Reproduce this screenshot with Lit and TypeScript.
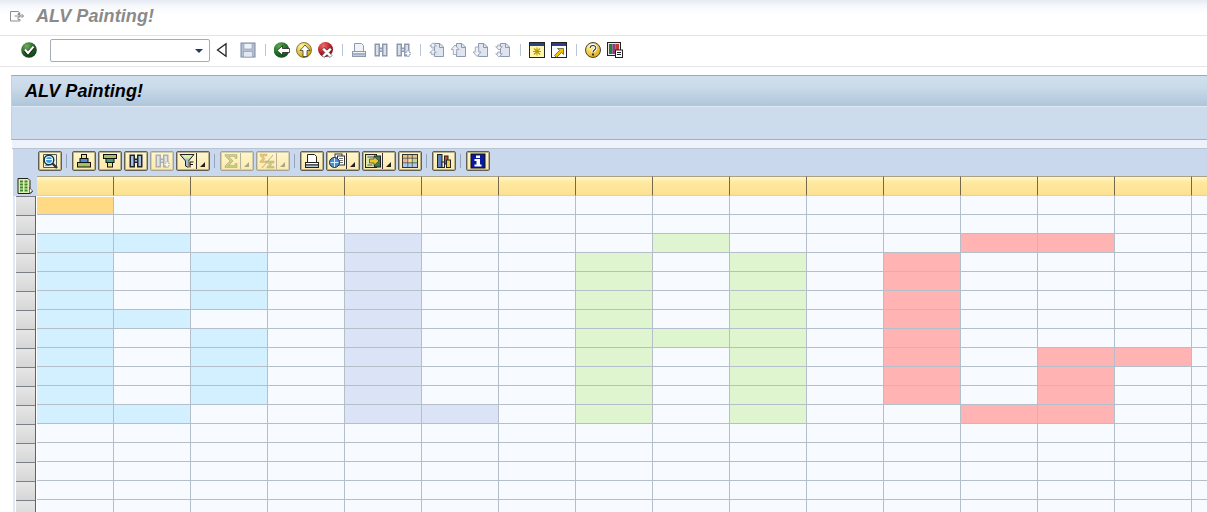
import { LitElement, html, svg, css, SVGTemplateResult } from "lit";
import { customElement } from "lit/decorators.js";

const s = (body: SVGTemplateResult, size = 16) =>
  html`<svg width=${size} height=${size} viewBox="0 0 16 16">${body}</svg>`;

const G = "#8e9ab0"; // disabled grey-blue line
const L = "#dfe4ee"; // disabled fill

const binocs = (c: string, f: string) => svg`
  <path d="M1.500 1.500h5.500v4h2v-4h5.500v13h-5.500v-4.500h-2v4.500h-5.500z" fill=${c}/>
  <rect x="3" y="3" width="2.500" height="10" fill=${f}/><rect x="10.500" y="3" width="2.500" height="10" fill=${f}/>
  <rect x="7" y="7" width="2" height="1.600" fill=${f}/>`;

const docPage = (extra: SVGTemplateResult) => svg`
  <path d="M5.500 1.500h5.500l3.500 3.500v9.500h-9z" fill=${L} stroke=${G}/><path d="M10.500 1.500v4h4" fill="none" stroke=${G}/>${extra}`;

const printer = (c: string, top: string, tray: string) => svg`
  <path d="M3.500 1.500h7l2 2v6h-9z" fill=${top} stroke=${c}/>
  <rect x="1.500" y="9.500" width="13" height="2.500" fill=${top} stroke=${c}/>
  <rect x="1.500" y="12" width="13" height="2.500" fill=${tray} stroke=${c}/>`;

const ICONS: Record<string, ReturnType<typeof s>> = {
  check: s(svg`<defs><radialGradient id="gk" cx=".35" cy=".25" r=".85"><stop offset="0" stop-color="#6fae5a"/><stop offset=".6" stop-color="#1f5a22"/><stop offset="1" stop-color="#0e3512"/></radialGradient></defs>
    <circle cx="8" cy="8" r="7.800" fill="url(#gk)"/><path d="M4 8l3 3.400 5.500-6.400" fill="none" stroke="#111" stroke-width="3.400"/><path d="M4 7.600l3 3.400 5.500-6.400" fill="none" stroke="#fff" stroke-width="2.200"/>`),
  tri: s(svg`<path d="M12 1.800v12.400L3.500 8z" fill="#fff" stroke="#222" stroke-width="1.300"/>`),
  save: s(svg`<rect x="1" y="1" width="14" height="14" fill="#b5bfd3" stroke="#7c89a3"/><rect x="4" y="1.500" width="8" height="5.500" fill="#eef1f7" stroke="#8b97ae" stroke-width=".6"/><rect x="3.500" y="9.500" width="9" height="5.500" fill="#e3e7f0" stroke="#8b97ae" stroke-width=".6"/>`),
  back: s(svg`<defs><radialGradient id="gb" cx=".35" cy=".25" r=".85"><stop offset="0" stop-color="#5fa84f"/><stop offset=".6" stop-color="#1a6a26"/><stop offset="1" stop-color="#0f3f15"/></radialGradient></defs>
    <circle cx="7.500" cy="8" r="7.800" fill="url(#gb)"/><path d="M3 8.500l5.500-4.800v2.800H15.500v4H8.500v2.800z" fill="#fff" stroke="#111" stroke-width=".7"/>`),
  up: s(svg`<defs><radialGradient id="gu" cx=".35" cy=".25" r=".85"><stop offset="0" stop-color="#fff7a0"/><stop offset="1" stop-color="#c79a00"/></radialGradient></defs>
    <circle cx="8" cy="8" r="7.500" fill="url(#gu)" stroke="#5a4c0c" stroke-width=".7"/><path d="M9 3l5 5.500h-3V14.500H7V8.500H4z" fill="#fff" stroke="#222" stroke-width=".7"/>`),
  cancel: s(svg`<defs><radialGradient id="gc" cx=".35" cy=".25" r=".85"><stop offset="0" stop-color="#f06a6a"/><stop offset=".6" stop-color="#b01a22"/><stop offset="1" stop-color="#6c0a10"/></radialGradient></defs>
    <circle cx="7.500" cy="7.500" r="7.500" fill="url(#gc)"/><path d="M6 5.500l3 2.700 3-2.700 2 2-2.800 3 2.800 3-2 2-3-2.800-3 2.800-2-2 2.800-3-2.800-3z" fill="#fff" stroke="#222" stroke-width=".6"/>`),
  printD: s(printer(G, "#f0f2f7", "#c3cbdb")),
  findD: s(binocs(G, "#dbe0ea")),
  findNextD: s(svg`${binocs(G, "#dbe0ea")}<path d="M10 10.500h2v-2h2v2h2v2h-2v2h-2v-2h-2z" fill="#fff" stroke=${G} stroke-width=".6"/>`),
  first: s(docPage(svg`<path d="M4 .8L7.300 4H5.300v2H2.700V4H.7z M4 7.500L7.300 10.700H5.300v2H2.700v-2H.7z" fill="#eef1f7" stroke=${G} stroke-width=".8"/>`)),
  prev: s(docPage(svg`<path d="M4 3L8 7.500H5.700v5H2.300v-5H0z" fill="#eef1f7" stroke=${G} stroke-width=".8"/>`)),
  next: s(docPage(svg`<path d="M4 14.500L8 10H5.700V5H2.300v5H0z" fill="#eef1f7" stroke=${G} stroke-width=".8"/>`)),
  last: s(docPage(svg`<path d="M4 8L7.300 4.800H5.300V3H2.700v1.800H.7z M4 15L7.300 11.800H5.300V10H2.700v1.800H.7z" fill="#eef1f7" stroke=${G} stroke-width=".8"/>`)),
  newWin: s(svg`<rect x=".5" y=".5" width="15" height="15" fill="#fff7b0" stroke="#222"/><rect x="1" y="1" width="14" height="3" fill="#2a3f8f"/><path d="M8 5.500v8M4 9.500h8M5 6.500l6 6M11 6.500l-6 6" stroke="#b79a00" stroke-width="1.100"/>`),
  shortcut: s(svg`<rect x=".5" y=".5" width="15" height="15" fill="#fff" stroke="#222"/><rect x="1" y="1" width="14" height="3" fill="#2a3f8f"/><path d="M3.500 13.500l5-5-2-2h6v6l-2-2-5 5z" fill="#f2c200" stroke="#333" stroke-width=".6"/>`),
  help: s(svg`<defs><radialGradient id="gh" cx=".35" cy=".3" r=".8"><stop offset="0" stop-color="#fff6a0"/><stop offset="1" stop-color="#e0a400"/></radialGradient></defs>
    <circle cx="8" cy="8" r="7.500" fill="url(#gh)" stroke="#333" stroke-width=".9"/><path d="M5.200 6c0-3.300 5.600-3.300 5.600 0 0 2-2.800 2-2.800 4.200" fill="none" stroke="#fff" stroke-width="3"/><path d="M5.200 6c0-3.300 5.600-3.300 5.600 0 0 2-2.800 2-2.800 4.200" fill="none" stroke="#333" stroke-width="1.100"/><rect x="7" y="11.500" width="2" height="2" fill="#333"/>`),
  layout: s(svg`<rect x=".5" y=".5" width="13" height="13" fill="#e8e8e8" stroke="#222"/><rect x="2" y="2" width="3.500" height="10" fill="#2c7a3a"/><rect x="5.500" y="2" width="3" height="10" fill="#8a3b8a"/><rect x="8.500" y="2" width="3.500" height="10" fill="#c23a30"/><rect x="8.500" y="8" width="7" height="7.500" fill="#fff" stroke="#222"/><path d="M10 10.500h4M10 12.500h4" stroke="#222"/>`),
  details: s(svg`<path d="M1.500 1.500h13v13h-13z" fill="#eef1e4" stroke="#4a5a50"/><path d="M3 12.500h4" stroke="#999"/><circle cx="7" cy="7" r="4.800" fill="#eef7ff" stroke="#16323c" stroke-width="1.400"/><circle cx="7" cy="7" r="3" fill="#3f9fe0"/><path d="M4 6.500h6" stroke="#fff"/><path d="M10.500 10.500l4.500 4.500" stroke="#333" stroke-width="2.400"/>`),
  sortA: s(svg`<rect x="5.500" y="1.500" width="5" height="4" fill="#e9e27a" stroke="#111"/><rect x="4" y="5.500" width="8" height="4" fill="#4b8fd0" stroke="#111"/><rect x="1.500" y="9.500" width="13" height="4.500" fill="#a8c062" stroke="#111"/>`),
  sortD: s(svg`<rect x="1.500" y="1.500" width="13" height="4" fill="#a8c062" stroke="#111"/><rect x="4" y="5.500" width="8" height="4" fill="#3ea07e" stroke="#111"/><rect x="5.500" y="9.500" width="5" height="4.500" fill="#e9e27a" stroke="#111"/>`),
  find: s(binocs("#1d2533", "#a9bfe0")),
  filter: s(svg`<path d="M1 1.500h14L9.500 8v6.500l-3-1.500V8z" fill="#9fc1d8" stroke="#222"/><path d="M2.500 2h11l-3.300 3.500H5.800z" fill="#dff0a0"/><rect x="9.500" y="8" width="6" height="7" fill="#fff6cf"/><path d="M11 14.500V9h3.500M11 11.500h3" stroke="#111" stroke-width="1.200" fill="none"/>`),
  sum: s(svg`<path d="M2 1.500h12v4h-1.800L11.500 3.500H6l4 4.500-4 4.500h5.500l.7-2H14v4H2v-1.500L7 8 2 3z" fill="#b9c36f" stroke="#8a8a5a" stroke-width=".5"/>`),
  subtotal: s(svg`<path d="M1 1h7v2H4l2 2.500L4 8h4v1.500H1V8l3-2.500L1 3z" fill="#e0b860" stroke="#a89050" stroke-width=".4"/><path d="M8 8h7v2h-4l2 1.500-2 2h4V15H8v-1.500l3-2-3-2z" fill="#b9c36f" stroke="#8a8a5a" stroke-width=".4"/><path d="M3 15L14 2" stroke="#a89a70"/>`),
  print: s(printer("#222", "#fff", "#b9cbe0")),
  views: s(svg`<rect x="6" y="1" width="7" height="9" fill="#fff" stroke="#333"/><rect x="8.500" y="3" width="7" height="9" fill="#fff" stroke="#333"/><path d="M10 5.500h4M10 7.500h4M10 9.500h4" stroke="#777"/><circle cx="5.500" cy="9.500" r="5" fill="#4a90d8" stroke="#16323c"/><path d="M1.500 9.500h8M5.500 5v9" stroke="#dbeeff"/>`),
  exportB: s(svg`<rect x=".5" y="1.500" width="11" height="13" fill="#dbe7a8" stroke="#222"/><path d="M2.500 4h7M2.500 12h5" stroke="#556"/><rect x="9.500" y="3" width="6" height="11" fill="#3e7d52" stroke="#222"/><path d="M4.500 6h4.500V3.500L14 8l-5 4.500V10H4.500z" fill="#e8c832" stroke="#123" stroke-width=".6"/>`),
  grid: s(svg`<rect x=".5" y="1.500" width="15" height="13" fill="#f6f4ea" stroke="#333"/><rect x="1" y="2" width="14" height="3" fill="#e2c57a"/><rect x="1" y="5.500" width="4.500" height="4" fill="#f2b0a0"/><rect x="6" y="5.500" width="4" height="4" fill="#f6e27a"/><rect x="10.500" y="5.500" width="4.500" height="4" fill="#b5dc90"/><rect x="1" y="10" width="4.500" height="4" fill="#a8c8f0"/><rect x="6" y="10" width="4" height="4" fill="#a8c8f0"/><rect x="10.500" y="10" width="4.500" height="4" fill="#a8c8f0"/><path d="M5.750 2v12M10.250 2v12M1 5.250h14M1 9.750h14" stroke="#333" stroke-width=".7"/>`),
  graph: s(svg`<rect x="1.500" y="1.500" width="4.500" height="13" fill="#5c82bf" stroke="#222"/><rect x="6" y="9" width="2.500" height="5.500" fill="#eee" stroke="#222"/><rect x="8.500" y="3" width="3.500" height="8" fill="#c84a3a" stroke="#222"/><rect x="10.500" y="7" width="4" height="7.500" fill="#f2d040" stroke="#222"/>`),
  info: s(svg`<rect x="1" y="1" width="14" height="14" fill="#0a1a9c" stroke="#111"/><path d="M6 2.500h4v2.500H6zM4.500 6h5.500V11.500H11.500V13.500h-7V11.500h2V8h-2z" fill="#fff"/>`),
  selAll: s(svg`<path d="M1 .5h10l2 2v9.500l2.500 1.500-2.500 2H1z" fill="#e4eeb0" stroke="#222"/><path d="M3 3.500h3M7.500 3.500h3M3 6.500h3M7.500 6.500h3M3 9.500h3M7.500 9.500h3M3 12.500h3M7.500 12.500h3" stroke="#3b8a2e" stroke-width="2"/><path d="M12.500 9.500l3 3.500-3 2.500z" fill="#fff" stroke="#222" stroke-width=".6"/>`),
  pageIcon: s(svg`<path d="M1.500 3.500h8l1.500 2h-2v1h2v2.500h-2v2.500h2v1.500h-9.500z" fill="none" stroke="#8c8c92"/><path d="M5.500 8h9l-2-2M14.500 8l-2 2" fill="none" stroke="#8c8c92"/>`),
};

type Top = { i?: string; sep?: number; gapL?: number };
const TOP: Top[] = [
  { i: "tri" }, { i: "save", gapL: 4 }, { sep: 12 }, { i: "back" }, { i: "up" }, { i: "cancel" }, { sep: 11 },
  { i: "printD" }, { i: "findD" }, { i: "findNextD" }, { sep: 12 },
  { i: "first" }, { i: "prev" }, { i: "next" }, { i: "last" }, { sep: 12 },
  { i: "newWin" }, { i: "shortcut" }, { sep: 12 }, { i: "help" }, { i: "layout" },
];

type Btn = { i?: string; menu?: boolean; off?: boolean; sep?: boolean };
const ALV: Btn[] = [
  { i: "details" }, { sep: true }, { i: "sortA" }, { i: "sortD" }, { i: "find" }, { i: "findNextD", off: true },
  { i: "filter", menu: true }, { sep: true }, { i: "sum", menu: true, off: true }, { i: "subtotal", menu: true, off: true },
  { sep: true }, { i: "print" }, { i: "views", menu: true }, { i: "exportB", menu: true }, { i: "grid" },
  { sep: true }, { i: "graph" }, { sep: true }, { i: "info" },
];

const COLS = 16;
const ROWS = 17;
const range = (a: number, b: number) => Array.from({ length: b - a + 1 }, (_, k) => a + k);
const paint = new Map<string, string>();
const put = (cls: string, cols: number[], rows: number[]) =>
  cols.forEach((c) => rows.forEach((r) => paint.set(`${r}:${c}`, cls)));
put("sel", [0], [0]);
put("blue", [0], range(2, 11));
put("blue", [1], [2, 6, 11]);
put("blue", [2], [...range(3, 5), ...range(7, 10)]);
put("lav", [4], range(2, 11));
put("lav", [5], [11]);
put("green", [7, 9], range(3, 11));
put("green", [8], [2, 7]);
put("red", [11], range(3, 10));
put("red", [12], [2, 11]);
put("red", [13], [2, ...range(8, 11)]);
put("red", [14], [8]);

@customElement("app-root")
export class AppRoot extends LitElement {
  static styles = css`
    :host { display: block; width: 1207px; height: 512px; overflow: hidden; background: #fff; font-family: "Liberation Sans", Arial, sans-serif; }
    .head { height: 36px; box-sizing: border-box; display: flex; align-items: center; gap: 11px; padding: 0 0 3px 9px; background: linear-gradient(#e6eaf3 0, #f6f8fb 6px, #fff 14px); border-bottom: 1px solid #e9e1ea; }
    .head b { font: italic bold 18px "Liberation Sans", Arial, sans-serif; letter-spacing: .08px; color: #8a8a8a; }
    .tools { height: 31px; box-sizing: border-box; display: flex; align-items: center; padding-left: 18px; border-bottom: 1px solid #e9e5ea; padding-bottom: 1px; }
    .slot { width: 22px; flex: none; display: flex; justify-content: center; align-items: center; height: 22px; margin-bottom: 2px; }
    .slot.gap { margin-left: 4px; }
    .tsep { flex: none; display: flex; justify-content: center; margin-bottom: 2px; }
    .tsep i { width: 1px; height: 12px; background: #b9c6d8; display: block; }
    .tsep.w12 { width: 12px; } .tsep.w11 { width: 11px; }
    .combo { flex: none; width: 160px; height: 23px; box-sizing: border-box; margin: 0 1px 0 10px; border: 1px solid #a6acb5; border-radius: 2px; background: #fff; display: flex; align-items: center; justify-content: flex-end; padding-right: 6px; }
    .combo i { width: 0; height: 0; border: 4px solid transparent; border-top: 4px solid #1f3a63; border-bottom: 0; display: block; }
    .main { margin: 8px 0 0 11px; width: 1300px; }
    .pagetitle { height: 32px; box-sizing: border-box; border-top: 1px solid #9fa9b5; border-left: 1px solid #c5d2e0; border-bottom: 1px solid #dfe9f4; padding-left: 13px; display: flex; align-items: center; background: linear-gradient(#d0dfee, #cbdbea 35%, #aec6da); }
    .pagetitle b { font: italic bold 18px "Liberation Sans", Arial, sans-serif; letter-spacing: .08px; color: #000; }
    .band { height: 33px; box-sizing: border-box; background: #ccdcec; border-left: 1px solid #c5d2e0; border-bottom: 1px solid #a4afbb; }
    .gapband { height: 9px; background: #eef2fa; border-bottom: 1px solid #b9c5d3; box-sizing: border-box; margin-left: 1px; }
    .alvbar { height: 27px; margin-left: 2px; padding-left: 25px; display: flex; align-items: center; background: #c9d8ec; box-sizing: border-box; gap: 2px; padding-bottom: 3px; }
    .btn { width: 24px; height: 20px; box-sizing: border-box; flex: none; display: flex; align-items: center; justify-content: center; border: 1px solid #5f5f55; box-shadow: inset 0 0 0 1px #b9b08a; border-radius: 2px; background: linear-gradient(#fff6cc, #fde9ac); }
    .btn.menu { width: 34px; justify-content: flex-start; padding-left: 2px; }
    .btn.off { border-color: #a3a398; box-shadow: inset 0 0 0 1px #d4cfae; }
    .btn.off svg { opacity: .75; }
    .mdiv { width: 1px; height: 16px; background: #333; margin: 0 3px 0 1px; flex: none; }
    .off .mdiv { background: #b5b29c; }
    .caret { width: 0; height: 0; border-left: 5px solid transparent; border-bottom: 5px solid #222; margin-top: 6px; flex: none; }
    .off .caret { border-bottom-color: #a8a690; }
    .asep { flex: none; width: 1px; height: 14px; margin: 0 3px 0 2px; background: #93a4bb; }
    .table { display: grid; grid-template-columns: 2px 2px 20px 2px repeat(${COLS}, 77px); grid-template-rows: 20px; grid-auto-rows: 19px; background: #fff; }
    .strip { background: #dfe8f5; }
    .strip.top { background: #c9d8ec; }
    .gutter { background: #5a6570; width: 1px; justify-self: start; }
    .rowhd { box-sizing: border-box; border-top: 1px solid #7b8088; background: linear-gradient(#e6e6e6, #d6d6d6); margin-left: 1px; }
    .corner { background: #c9d8ec; display: flex; align-items: center; justify-content: center; }
    .hd { box-sizing: border-box; border-top: 1px solid #a9a182; border-bottom: 1px solid #e8d48a; border-right: 1px solid #74694c; background: linear-gradient(#fff6c4, #ffe9a0 30%, #fbe090); }
    .cell { box-sizing: border-box; border-bottom: 1px solid #b4bfc9; border-right: 1px solid #b4bfc9; background: #f7faff; }
    .cell.sel { background: #ffd984; margin: 1px 0 0 0; }
    .blue { background: #d2f0ff; } .lav { background: #dbe3f7; } .green { background: #dff5cf; } .red { background: #ffb3b3; }
  `;

  render() {
    return html`
      <div class="head">${ICONS.pageIcon}<b>ALV Painting!</b></div>
      <div class="tools">
        <span class="slot">${ICONS.check}</span>
        <div class="combo"><i></i></div>
        ${TOP.map((t) =>
          t.i
            ? html`<span class="slot ${t.gapL ? "gap" : ""}">${ICONS[t.i]}</span>`
            : html`<span class="tsep w${t.sep}"><i></i></span>`
        )}
      </div>
      <div class="main">
        <div class="pagetitle"><b>ALV Painting!</b></div>
        <div class="band"></div>
        <div class="gapband"></div>
        <div class="alvbar">
          ${ALV.map((b) =>
            b.sep
              ? html`<span class="asep"></span>`
              : html`<span class="btn ${b.menu ? "menu" : ""} ${b.off ? "off" : ""}">
                  ${ICONS[b.i!]}${b.menu ? html`<span class="mdiv"></span><span class="caret"></span>` : ""}
                </span>`
          )}
        </div>
        <div class="table">
          <div></div><div class="strip top"></div><div class="corner">${ICONS.selAll}</div><div class="strip top"></div>
          ${range(0, COLS - 1).map(() => html`<div class="hd"></div>`)}
          ${range(0, ROWS - 1).map(
            (r) => html`
              <div></div><div class="strip"></div><div class="rowhd"></div><div class="gutter"></div>
              ${range(0, COLS - 1).map((c) => html`<div class="cell ${paint.get(`${r}:${c}`) ?? ""}"></div>`)}
            `
          )}
        </div>
      </div>
    `;
  }
}
